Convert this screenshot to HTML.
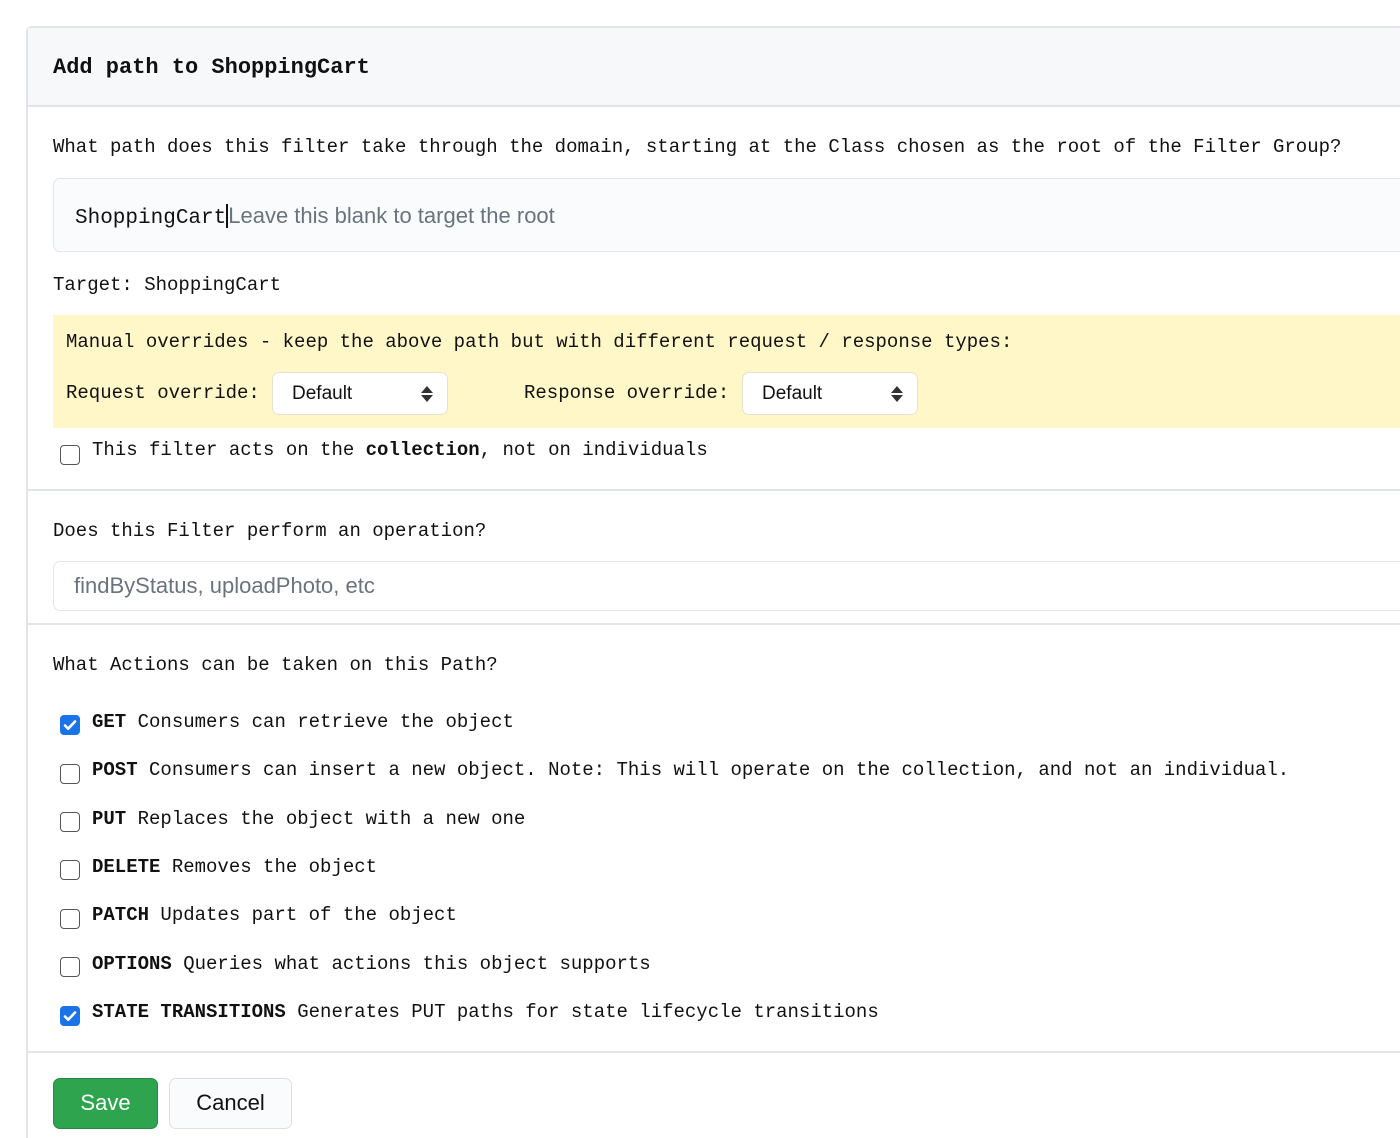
<!DOCTYPE html>
<html style="height:1138px;overflow:hidden"><head><meta charset="utf-8">
<style>
*{box-sizing:border-box;margin:0;padding:0}
body{width:1400px;height:1138px;background:#fff;position:relative;overflow:hidden;font-family:"Liberation Mono","DejaVu Sans Mono",monospace;color:#111;font-size:19px}
.a{position:absolute;white-space:nowrap;line-height:22px}
.card{position:absolute;left:26px;top:26px;width:1374px;height:1112px;border:2px solid #e1e4e8;border-right:none;border-bottom:none;border-radius:6px 0 0 0;background:#fff}
.hdr{position:absolute;left:28px;top:28px;width:1372px;height:79px;background:#f6f8fa;border-bottom:2px solid #e1e4e8}
.hr{position:absolute;left:28px;width:1372px;height:2px;background:#e1e4e8}
.inp{position:absolute;border:1.5px solid #e1e4e8;border-right:none;border-radius:7px 0 0 7px;background:#fafbfc}
.sans{font-family:"Liberation Sans",Arial,sans-serif}
.sel{position:absolute;top:372px;width:176px;height:43px;background:#fff;border:1.5px solid #e5e2d0;border-radius:7px}
.sel span{position:absolute;left:19px;top:10px;font-size:19px;line-height:22px}
.arr{position:absolute;left:148px;top:13px;width:12px;height:16px}
.arr:before{content:"";position:absolute;left:0;top:0;border-left:6px solid transparent;border-right:6px solid transparent;border-bottom:7px solid #333}
.arr:after{content:"";position:absolute;left:0;top:9px;border-left:6px solid transparent;border-right:6px solid transparent;border-top:7px solid #333}
.cb{position:absolute;left:60px;width:20px;height:20px;border:1.6px solid #555;border-radius:4px;background:#fff}
.cb.on{background:#1a73e8;border-color:#1a73e8}
.cb.on svg{position:absolute;left:1px;top:1px}
b{font-weight:bold}
</style></head><body>
<div class="card"></div>
<div class="hdr"></div>
<div class="a" style="left:53px;top:56px;font-size:22px;font-weight:bold;line-height:24px">Add path to ShoppingCart</div>
<div class="a" style="left:53px;top:136px">What path does this filter take through the domain, starting at the Class chosen as the root of the Filter Group?</div>
<div class="inp" style="left:53px;top:178px;width:1347px;height:74px"></div>
<div class="a" style="left:75px;top:204px;font-size:21px;line-height:24px">ShoppingCart<span style="display:inline-block;width:2px;height:24px;background:#111;vertical-align:top"></span><span class="sans" style="color:#6a737d;font-size:22px">Leave this blank to target the root</span></div>
<div class="a" style="left:53px;top:274px">Target: ShoppingCart</div>
<div style="position:absolute;left:53px;top:315px;width:1347px;height:113px;background:#fff7c7"></div>
<div class="a" style="left:66px;top:331px">Manual overrides - keep the above path but with different request / response types:</div>
<div class="a" style="left:66px;top:382px">Request override:</div>
<div class="sel sans" style="left:272px"><span>Default</span><i class="arr"></i></div>
<div class="a" style="left:524px;top:382px">Response override:</div>
<div class="sel sans" style="left:742px"><span>Default</span><i class="arr"></i></div>
<div class="cb" style="top:445px"></div>
<div class="a" style="left:92px;top:439px">This filter acts on the <b>collection</b>, not on individuals</div>
<div class="hr" style="top:489px"></div>
<div class="a" style="left:53px;top:520px">Does this Filter perform an operation?</div>
<div class="inp" style="left:53px;top:561px;width:1347px;height:50px;background:#fff"></div>
<div class="a sans" style="left:74px;top:574px;font-size:22px;line-height:24px;color:#6a737d">findByStatus, uploadPhoto, etc</div>
<div class="hr" style="top:623px"></div>
<div class="a" style="left:53px;top:654px">What Actions can be taken on this Path?</div>

<div class="cb on" style="top:715px"><svg width="16" height="16" viewBox="0 0 16 16"><path d="M3 8.5l3.2 3.2L13 4.5" fill="none" stroke="#fff" stroke-width="2.6" stroke-linecap="round" stroke-linejoin="round"/></svg></div>
<div class="a" style="left:92px;top:711px"><b>GET</b> Consumers can retrieve the object</div>
<div class="cb" style="top:764px"></div>
<div class="a" style="left:92px;top:759px"><b>POST</b> Consumers can insert a new object. Note: This will operate on the collection, and not an individual.</div>
<div class="cb" style="top:812px"></div>
<div class="a" style="left:92px;top:808px"><b>PUT</b> Replaces the object with a new one</div>
<div class="cb" style="top:860px"></div>
<div class="a" style="left:92px;top:856px"><b>DELETE</b> Removes the object</div>
<div class="cb" style="top:909px"></div>
<div class="a" style="left:92px;top:904px"><b>PATCH</b> Updates part of the object</div>
<div class="cb" style="top:957px"></div>
<div class="a" style="left:92px;top:953px"><b>OPTIONS</b> Queries what actions this object supports</div>
<div class="cb on" style="top:1006px"><svg width="16" height="16" viewBox="0 0 16 16"><path d="M3 8.5l3.2 3.2L13 4.5" fill="none" stroke="#fff" stroke-width="2.6" stroke-linecap="round" stroke-linejoin="round"/></svg></div>
<div class="a" style="left:92px;top:1001px"><b>STATE TRANSITIONS</b> Generates PUT paths for state lifecycle transitions</div>
<div class="hr" style="top:1051px"></div>
<div class="sans" style="position:absolute;left:53px;top:1078px;width:105px;height:51px;background:#2ea44f;border:1.5px solid #26893f;border-radius:7px;color:#fff;font-size:22px;line-height:48px;text-align:center">Save</div>
<div class="sans" style="position:absolute;left:169px;top:1078px;width:123px;height:51px;background:#fafbfc;border:1.5px solid #dcdfe3;border-radius:7px;color:#111;font-size:22px;line-height:48px;text-align:center">Cancel</div>
</body></html>
